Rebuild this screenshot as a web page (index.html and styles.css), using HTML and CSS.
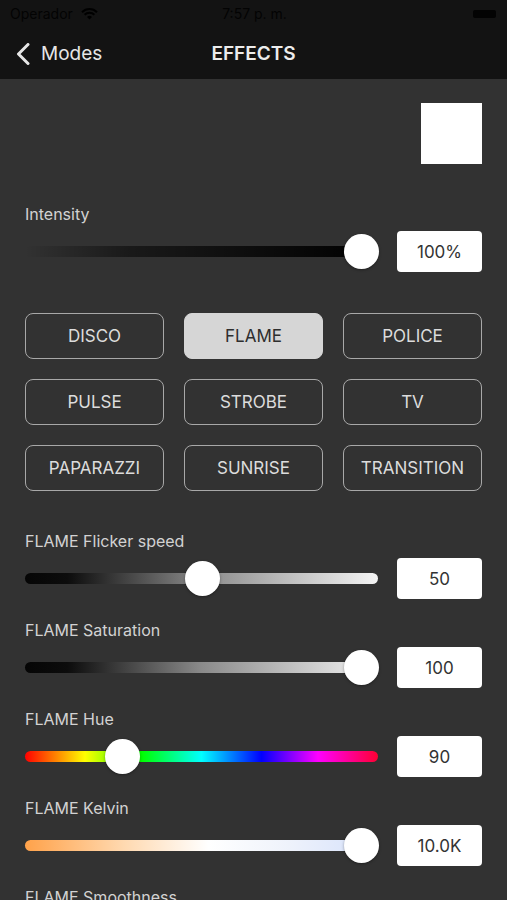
FILE: index.html
```html
<!DOCTYPE html>
<html lang="es">
<head>
    <meta charset="UTF-8">
    <meta name="viewport" content="width=device-width, initial-scale=1.0">
    <title>Effects</title>
    <link rel="stylesheet" href="styles.css">
</head>
<body>
    <div class="header">
        <div class="status-bar">
            <div class="status-left">
                <span>Operador</span>
                <svg class="wifi" width="17" height="12" viewBox="0 0 17 12">
                    <path d="M1 4.2 A10.5 10.5 0 0 1 16 4.2" fill="none" stroke="#000" stroke-width="2"/>
                    <path d="M3.6 6.8 A6.8 6.8 0 0 1 13.4 6.8" fill="none" stroke="#000" stroke-width="2"/>
                    <path d="M8.5 11.5 L6 9 A3.5 3.5 0 0 1 11 9 Z" fill="#000"/>
                </svg>
            </div>
            <span class="status-time">7:57 p. m.</span>
            <div class="battery"></div>
        </div>
        <div class="nav-bar">
            <div class="back">
                <svg width="14" height="22" viewBox="0 0 14 22">
                    <path d="M12 1.5 L2.5 11 L12 20.5" fill="none" stroke="#e6e6e6" stroke-width="3" stroke-linecap="round" stroke-linejoin="round"/>
                </svg>
                <span>Modes</span>
            </div>
            <div class="nav-title">EFFECTS</div>
        </div>
    </div>

    <div class="content">
        <div class="swatch-row">
            <div class="swatch"></div>
        </div>

        <div class="control intensity">
            <div class="label">Intensity</div>
            <div class="slider-row">
                <div class="slider">
                    <div class="track track-intensity"></div>
                    <div class="thumb-area"><div class="thumb" style="left: 100%"></div></div>
                </div>
                <div class="value">100%</div>
            </div>
        </div>

        <div class="effects">
            <button class="effect">DISCO</button>
            <button class="effect active">FLAME</button>
            <button class="effect">POLICE</button>
            <button class="effect">PULSE</button>
            <button class="effect">STROBE</button>
            <button class="effect">TV</button>
            <button class="effect">PAPARAZZI</button>
            <button class="effect">SUNRISE</button>
            <button class="effect">TRANSITION</button>
        </div>

        <div class="control">
            <div class="label">FLAME Flicker speed</div>
            <div class="slider-row">
                <div class="slider">
                    <div class="track track-gray"></div>
                    <div class="thumb-area"><div class="thumb" style="left: 50%"></div></div>
                </div>
                <div class="value">50</div>
            </div>
        </div>

        <div class="control">
            <div class="label">FLAME Saturation</div>
            <div class="slider-row">
                <div class="slider">
                    <div class="track track-gray"></div>
                    <div class="thumb-area"><div class="thumb" style="left: 100%"></div></div>
                </div>
                <div class="value">100</div>
            </div>
        </div>

        <div class="control">
            <div class="label">FLAME Hue</div>
            <div class="slider-row">
                <div class="slider">
                    <div class="track track-hue"></div>
                    <div class="thumb-area"><div class="thumb" style="left: 25%"></div></div>
                </div>
                <div class="value">90</div>
            </div>
        </div>

        <div class="control">
            <div class="label">FLAME Kelvin</div>
            <div class="slider-row">
                <div class="slider">
                    <div class="track track-kelvin"></div>
                    <div class="thumb-area"><div class="thumb" style="left: 100%"></div></div>
                </div>
                <div class="value">10.0K</div>
            </div>
        </div>

        <div class="control">
            <div class="label">FLAME Smoothness</div>
        </div>
    </div>
</body>
</html>
```

FILE: styles.css
```css
body {
    margin: 0;
    background: #323232;
    font-family: Inter, Roboto, sans-serif;
    overflow: hidden;
}

/* Top bar */
.header {
    background: #131313;
    height: 79px;
}

.status-bar {
    height: 27px;
    display: flex;
    align-items: center;
    justify-content: space-between;
    padding: 0 11px 0 10px;
    color: #030303;
    font-size: 14px;
}

.status-left {
    display: flex;
    align-items: center;
    gap: 8px;
    width: 120px;
}

.battery {
    width: 23px;
    height: 8px;
    background: #030303;
    border-radius: 2px;
    margin-left: 94px;
}

.nav-bar {
    height: 52px;
    display: flex;
    align-items: center;
    position: relative;
}

.back {
    display: flex;
    align-items: center;
    gap: 11px;
    padding-left: 16px;
    color: #e6e6e6;
    font-size: 19px;
}

.back svg {
    margin-top: 1px;
}

.nav-title {
    position: absolute;
    left: 0;
    right: 0;
    text-align: center;
    color: #ececec;
    font-size: 19px;
    font-weight: 600;
    pointer-events: none;
}

/* Content */
.content {
    padding: 24px 25px 0 25px;
}

.swatch-row {
    display: flex;
    justify-content: flex-end;
}

.swatch {
    width: 61px;
    height: 61px;
    background: #fff;
}

.control {
    margin-top: 21px;
}

.control.intensity {
    margin-top: 40px;
}

.label {
    color: #d2d2d2;
    font-size: 16px;
    line-height: 20px;
    margin-bottom: 7px;
}

.slider-row {
    display: flex;
    align-items: center;
    gap: 19px;
}

.slider {
    flex: 1;
    position: relative;
    height: 41px;
    display: flex;
    align-items: center;
}

.track {
    width: 100%;
    height: 11px;
    border-radius: 6px;
}

.track-intensity {
    background: linear-gradient(to right, rgba(0,0,0,0) 0%, rgba(0,0,0,0.5) 30%, #000 100%);
}

.track-gray {
    background: linear-gradient(to right, #050505 0%, #0c0c0c 12%, #8a8a8a 50%, #f4f4f4 100%);
}

.track-hue {
    background: linear-gradient(to right, #ff0000 0%, #ffff00 17%, #00ff00 33%, #00ffff 50%, #0000ff 67%, #ff00ff 83%, #ff0033 100%);
}

.track-kelvin {
    background: linear-gradient(to right, #ffa24a 0%, #ffd9b0 28%, #ffffff 52%, #eef2fb 75%, #d4e0fb 100%);
}

/* the thumb centre runs between the two ends of this area */
.thumb-area {
    position: absolute;
    left: 17px;
    right: 17px;
    top: 0;
    bottom: 0;
}

.thumb {
    position: absolute;
    top: 3px;
    width: 35px;
    height: 35px;
    margin-left: -17px;
    border-radius: 50%;
    background: #fff;
    box-shadow: 0 1px 3px rgba(0, 0, 0, 0.35);
}

.value {
    width: 85px;
    height: 41px;
    background: #fff;
    border-radius: 4px;
    display: flex;
    align-items: center;
    justify-content: center;
    color: #333;
    font-size: 17px;
}

/* Effect buttons */
.effects {
    margin-top: 41px;
    margin-bottom: 40px;
    display: grid;
    grid-template-columns: repeat(3, 1fr);
    gap: 20px;
}

.effect {
    height: 46px;
    background: transparent;
    border: 1.5px solid #a8a8a8;
    border-radius: 8px;
    color: #dcdcdc;
    font-family: Inter, Roboto, sans-serif;
    font-size: 17px;
    padding: 0;
}

.effect.active {
    background: #d6d6d6;
    border-color: #d6d6d6;
    color: #2e2e2e;
}
```
